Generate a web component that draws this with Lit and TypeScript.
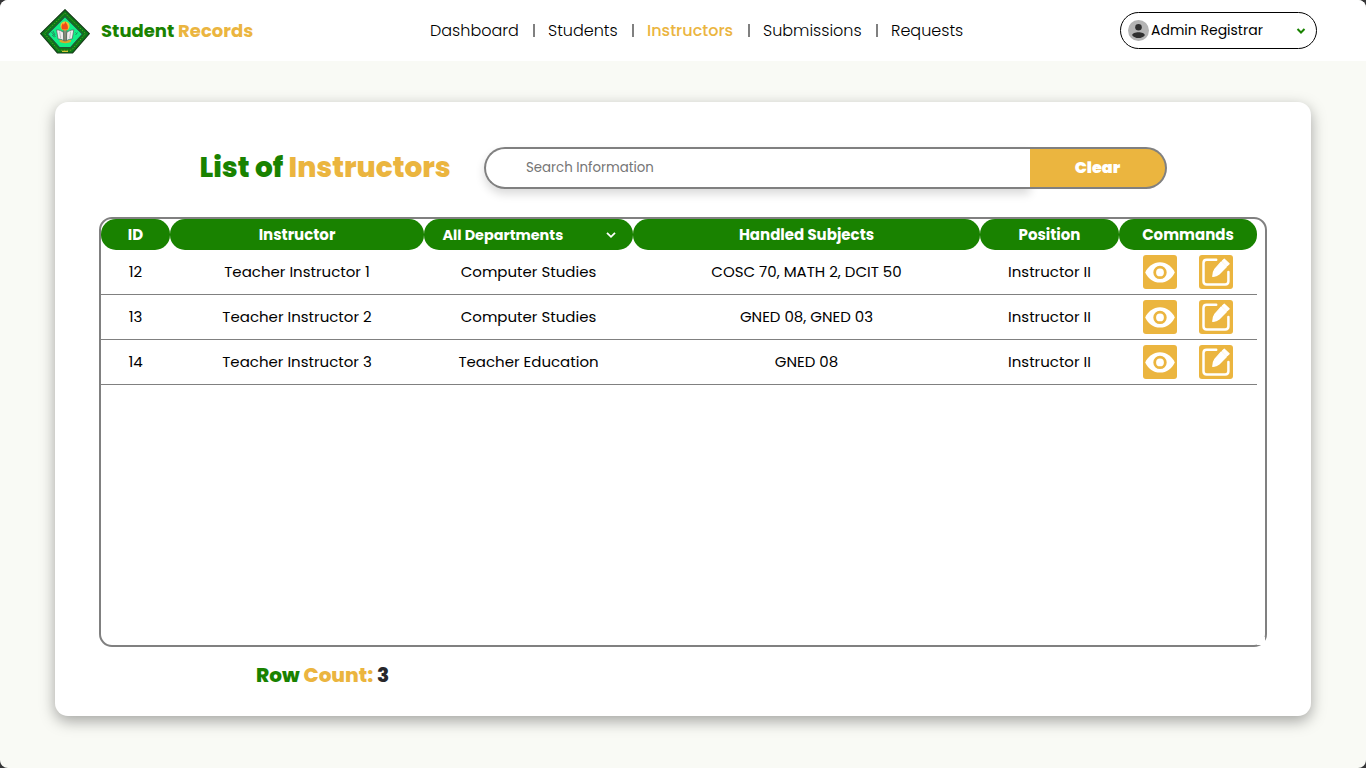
import { LitElement, html, css, svg } from "lit";
import { customElement, property } from "lit/decorators.js";
import { styleMap } from "lit/directives/style-map.js";

const NAV: { text: string; width: number; active?: boolean }[] = [
  { text: "Dashboard", width: 88 },
  { text: "Students", width: 69 },
  { text: "Instructors", width: 86, active: true },
  { text: "Submissions", width: 98 },
  { text: "Requests", width: 73 },
];

const ROWS: string[][] = [
  ["12", "Teacher Instructor 1", "Computer Studies", "COSC 70, MATH 2, DCIT 50", "Instructor II"],
  ["13", "Teacher Instructor 2", "Computer Studies", "GNED 08, GNED 03", "Instructor II"],
  ["14", "Teacher Instructor 3", "Teacher Education", "GNED 08", "Instructor II"],
];

const eyeIcon = svg`<svg viewBox="0 0 34 34" width="34" height="34">
  <path fill="#fff" d="M2.200 17.400C4.800 11.600 10.300 7.200 17 7.200s12.200 4.400 14.800 10.200C29.200 23.200 23.700 27.600 17 27.600S4.800 23.200 2.200 17.400z"/>
  <circle cx="17" cy="17.400" r="5.300" fill="none" stroke="#ebb53f" stroke-width="2.800"/>
</svg>`;

const editIcon = svg`<svg viewBox="0 0 34 34" width="34" height="34">
  <path d="M17.200 4.700H7.700c-2 0-3.200 1.200-3.200 3.200v18.300c0 2 1.200 3.200 3.200 3.200h18.500c2 0 3.200-1.200 3.200-3.200V17" fill="none" stroke="#fff" stroke-width="2.500" stroke-linecap="round"/>
  <path d="M25.300 4.200l4.800 4.600-1.900 1.900-4.800-4.700zM22.300 6.900l5 4.900-7.200 7.200c-1.700 1.400-3.900 2.200-6.300 2.400.1-2.700.6-5.200 2.100-7.200z" fill="#fff" stroke="#fff" stroke-width="1.200" stroke-linejoin="round"/>
</svg>`;

@customElement("app-logo")
class AppLogo extends LitElement {
  static styles = css`:host { display: block; width: 50px; height: 45px; } svg { display: block; }`;
  render() {
    return html`<svg viewBox="0 0 50 45" width="50" height="45">
      <path d="M25 .7L49.300 24.600 32.600 44H17.400L.7 24.600z" fill="#0b7a17" stroke="#173d1a" stroke-width="1.200"/>
      <path d="M25 4.200L45.500 24.600 31.500 41.300h-13L4.500 24.600z" fill="none" stroke="#c3bd3a" stroke-width="1" stroke-dasharray="1.400 1.600" opacity=".45"/>
      <path d="M25 7.600L42.500 25 30.500 38.600h-11L7.500 25z" fill="#12ef86" stroke="#22543a" stroke-width="1.100"/>
      <path d="M11.500 23l4 5M13 22l2 4M12 26l2.500 2M35.500 26l2-2.500M35.500 23.500l1.500 1.500" stroke="#278a62" stroke-width="1"/>
      <path d="M19.500 31h11.500v1.500c-2 2.300-9.500 2.300-11.500 0z" fill="#dba52b"/>
      <path d="M16.500 20.800c3 .2 5 1 7.200 2.800v8.200c-2-1.500-3.500-1.800-5.600-1.800zM33.800 20.800c-3 .2-5 1-7.200 2.800v8.200c2-1.500 3.500-1.800 5.600-1.800z" fill="#f0eeee" stroke="#4c5f59" stroke-width=".7"/>
      <path d="M19.600 22.500l1 6.500M30.700 22.500l-1 6.500" stroke="#a8a8a8" stroke-width=".7"/>
      <path d="M23.300 21h3.600l-.7 11h-2.200z" fill="#858b7a" stroke="#444" stroke-width=".4"/>
      <circle cx="25" cy="17" r="4.600" fill="#f0c533"/>
      <path d="M22 20.500c-1-2.500-.3-4.500 1-6.500l.8 1.800 1.700-3.300c.5 2 3.300 3.600 2.200 8z" fill="#ef4a19"/>
      <path d="M22 42.300h6" stroke="#d3c637" stroke-width="1.200"/>
    </svg>`;
  }
}

@customElement("site-header")
class SiteHeader extends LitElement {
  static styles = css`
    :host { display: grid; grid-template-columns: 390px 1fr 197px; align-items: center; height: 61px; padding: 0 49px 0 40px; box-sizing: border-box; background: #fff; }
    .brand { display: flex; align-items: center; gap: 11px; }
    app-logo { margin-top: 1px; }
    .name { font-size: 18px; font-weight: 700; color: #198200; white-space: nowrap; }
    .gold { color: #ebb53f; }
    nav { display: flex; align-items: center; font-size: 16px; font-weight: 300; color: #000; }
    .item { white-space: nowrap; }
    .item.active { color: #ebb53f; font-weight: 500; }
    .bar { flex: none; width: 2px; height: 13px; margin: 0 13.500px 0 14.500px; background: #808080; }
    .user { display: flex; align-items: center; height: 37px; box-sizing: border-box; padding: 0 10px 0 7px; border: 1px solid #000; border-radius: 19px; font-size: 14px; color: #000; background: #fff; }
    .avatar { display: block; margin-right: 2px; }
    .chev { display: block; margin-left: auto; }
  `;
  render() {
    return html`
      <div class="brand">
        <app-logo></app-logo>
        <div class="name">Student <span class="gold">Records</span></div>
      </div>
      <nav>
        ${NAV.map((n, i) => html`
          ${i ? html`<i class="bar"></i>` : ""}
          <div class="item ${n.active ? "active" : ""}" style=${styleMap({ width: `${n.width}px` })}>${n.text}</div>`)}
      </nav>
      <div class="user">
        <svg class="avatar" viewBox="0 0 21 21" width="21" height="21">
          <circle cx="10.500" cy="10.500" r="10.500" fill="#b4b4b4"/>
          <circle cx="10.500" cy="7.300" r="3.300" fill="#303030"/>
          <path d="M4.200 15.200c0-1.900 3-2.900 6.300-2.900s6.300 1 6.300 2.900c-1.300 1.800-3.700 2.900-6.300 2.900s-5-1.100-6.300-2.900z" fill="#303030"/>
        </svg>
        <span>Admin Registrar</span>
        <svg class="chev" viewBox="0 0 10 8" width="10" height="8"><path d="M1.500 2L5 5.500 8.500 2" fill="none" stroke="#198200" stroke-width="2"/></svg>
      </div>`;
  }
}

@customElement("instructor-table")
class InstructorTable extends LitElement {
  @property({ attribute: false }) rows: string[][] = [];
  static styles = css`
    :host { display: block; position: relative; height: 430px; box-sizing: border-box; border: 2px solid #808080; border-radius: 13px; font-size: 15px; color: #000; }
    .row { display: grid; grid-template-columns: 69px 254px 209px 347px 139px 138px; width: 1156px; }
    .head { height: 31px; font-weight: 700; color: #fff; }
    .th { display: flex; align-items: center; justify-content: center; background: #198200; border-radius: 15px; }
    .dept { justify-content: space-between; padding: 1px 17px 0 18.500px; font-size: 14.4px; }
    .body { height: 45px; box-sizing: border-box; border-bottom: 1px solid #808080; }
    .td { display: flex; align-items: center; justify-content: center; padding-bottom: 2px; white-space: nowrap; }
    .tools { display: flex; align-items: center; justify-content: center; gap: 22px; }
    .btn { width: 34px; height: 34px; border-radius: 3px; background: #ebb53f; }
    .btn svg { display: block; }
    .corner { position: absolute; right: 0; bottom: 0; width: 8px; height: 8px; background: #fff; }
  `;
  render() {
    return html`
      <div class="row head">
        <div class="th">ID</div>
        <div class="th">Instructor</div>
        <div class="th dept"><span>All Departments</span>
          <svg viewBox="0 0 10 8" width="10" height="8"><path d="M1 1.800L5 5.800l4-4" fill="none" stroke="#fff" stroke-width="1.800"/></svg>
        </div>
        <div class="th">Handled Subjects</div>
        <div class="th">Position</div>
        <div class="th">Commands</div>
      </div>
      ${this.rows.map((r) => html`
        <div class="row body">
          ${r.map((c) => html`<div class="td">${c}</div>`)}
          <div class="tools"><div class="btn">${eyeIcon}</div><div class="btn">${editIcon}</div></div>
        </div>`)}
      <div class="corner"></div>`;
  }
}

@customElement("app-root")
class AppRoot extends LitElement {
  static styles = css`
    :host { display: block; height: 768px; overflow: hidden; background: #363638; font-family: Poppins, Inter, sans-serif; }
    .window { display: flow-root; height: 768px; overflow: hidden; border-radius: 8px; background: #f9faf5; }
    .card { margin: 41px 55px 0; height: 614px; box-sizing: border-box; padding: 45px 44px 0; border-radius: 13px; background: #fff; box-shadow: 0 5px 15px rgba(0, 0, 0, .35); }
    .top { display: flex; align-items: center; height: 42px; padding-left: 100.500px; }
    h1 { width: 284.500px; margin: 0; font-size: 28px; line-height: 40px; font-weight: 800; color: #198200; white-space: nowrap; }
    .gold { color: #ebb53f; }
    .search { display: flex; align-items: center; width: 546px; height: 42px; box-sizing: border-box; padding: 0 0 0 40px; border: 2px solid #808080; border-right: 0; border-radius: 21px 0 0 21px; font-size: 13.333px; color: #757575; box-shadow: 0 5px 10px rgba(0, 0, 0, .15); }
    .clear { position: relative; display: flex; align-items: center; justify-content: center; width: 137px; height: 42px; box-sizing: border-box; padding-bottom: 1px; border: 2px solid #808080; border-left: 0; border-radius: 0 21px 21px 0; background: #ebb53f; font-size: 16px; font-weight: 900; color: #fff; }
    instructor-table { margin-top: 28px; }
    .count { padding: 15px 0 0 157px; font-size: 20px; line-height: 26px; font-weight: 800; color: #198200; }
    .num { color: #27272a; }
  `;
  render() {
    return html`
      <div class="window">
        <site-header></site-header>
        <section class="card">
          <div class="top">
            <h1>List of <span class="gold">Instructors</span></h1>
            <div class="search">Search Information</div>
            <div class="clear">Clear</div>
          </div>
          <instructor-table .rows=${ROWS}></instructor-table>
          <div class="count">Row <span class="gold">Count:</span> <span class="num">${ROWS.length}</span></div>
        </section>
      </div>`;
  }
}
